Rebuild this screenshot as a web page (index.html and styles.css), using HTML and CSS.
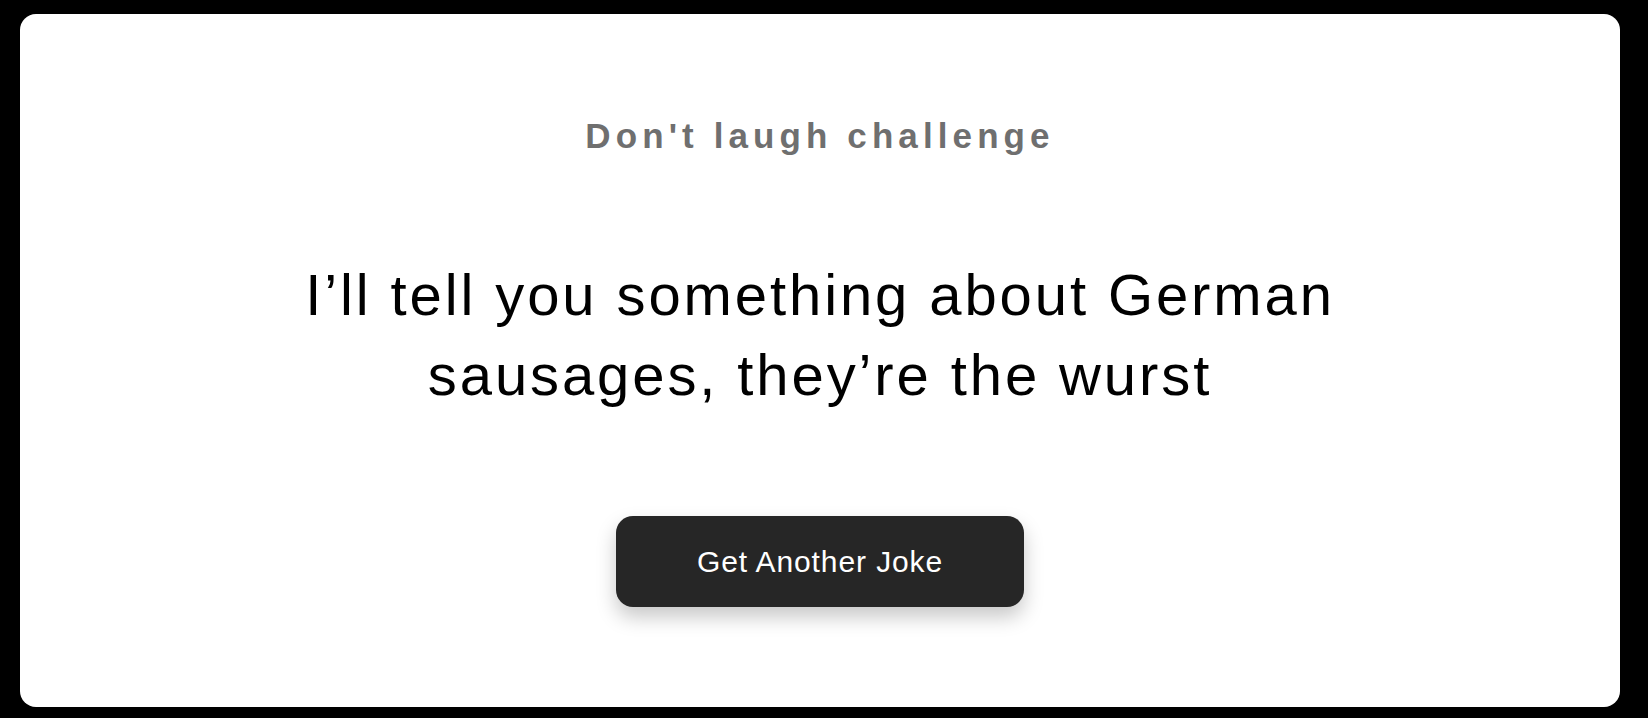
FILE: index.html
```html
<!DOCTYPE html>
<html lang="en">
<head>
<meta charset="utf-8">
<title>Don't laugh challenge</title>
<link rel="stylesheet" href="styles.css">
</head>
<body>
  <main class="card">
    <h1 class="title">Don't laugh challenge</h1>
    <p class="joke">I’ll tell you something about German sausages, they’re the wurst</p>
    <button class="btn" type="button">Get Another Joke</button>
  </main>
</body>
</html>
```

FILE: styles.css
```css
html, body {
  margin: 0;
  height: 100%;
}
body {
  background: #000;
  padding: 14px 28px 11px 20px;
  box-sizing: border-box;
  font-family: "Liberation Sans", Arial, Helvetica, sans-serif;
}
.card {
  background: #fff;
  border-radius: 16px;
  height: 693px;
  box-sizing: border-box;
  padding-top: 102px;
  display: flex;
  flex-direction: column;
  align-items: center;
}
.title {
  margin: 0;
  font-size: 35px;
  line-height: 40px;
  font-weight: 700;
  letter-spacing: 5.1px;
  color: #6f6f6f;
  text-align: center;
}
.joke {
  margin: 99px 0 0;
  max-width: 1100px;
  font-size: 58px;
  line-height: 80px;
  letter-spacing: 2.9px;
  color: #000;
  text-align: center;
}
.btn {
  margin-top: 101px;
  width: 408px;
  height: 91px;
  border: none;
  border-radius: 17px;
  background: #262626;
  color: #fff;
  font-family: inherit;
  font-size: 30px;
  letter-spacing: 0.9px;
  box-shadow: 0 10px 20px rgba(0, 0, 0, 0.22);
  cursor: pointer;
}
```
